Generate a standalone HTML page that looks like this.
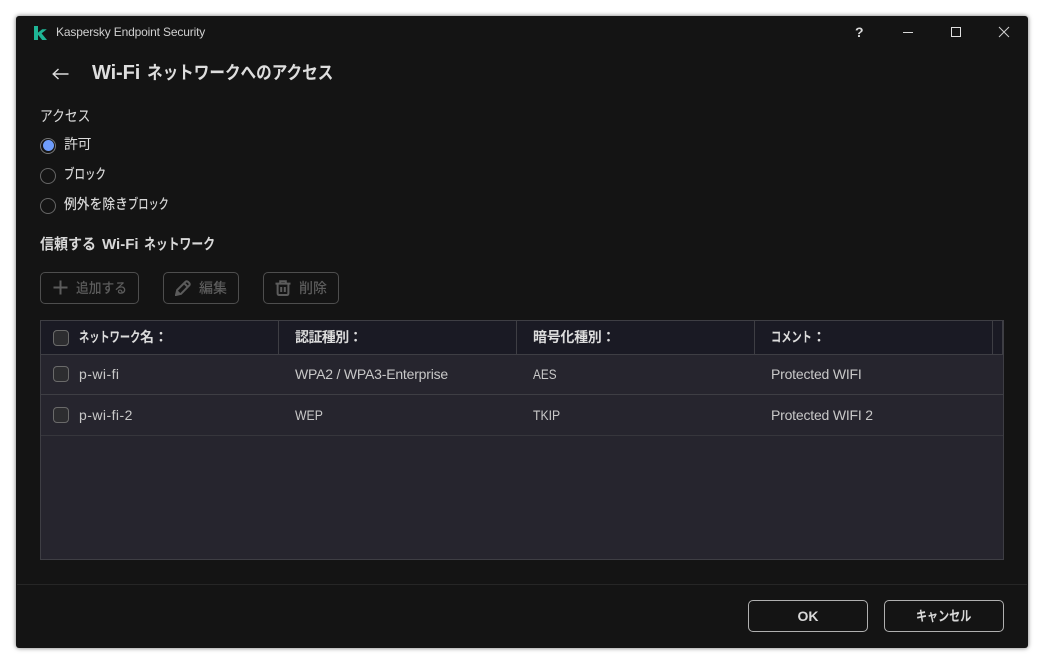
<!DOCTYPE html>
<html><head><meta charset="utf-8">
<style>
html,body{margin:0;padding:0;width:1044px;height:664px;overflow:hidden;background:#fff}
body{position:relative;font-family:"Liberation Sans","Noto Sans CJK JP",sans-serif;color:#d6d6d6}
.win{position:absolute;left:16px;top:16px;width:1012px;height:632px;background:#141414;border-radius:3px;box-shadow:0 0 5px rgba(0,0,0,.55)}
.t{position:absolute;white-space:nowrap;line-height:20px}
.b{position:absolute;box-sizing:border-box;border:1px solid #4e4e4e;border-radius:5px}
.r{position:absolute;left:40px;width:16px;height:16px;box-sizing:border-box;border:1px solid #666;border-radius:50%}
.c{position:absolute;left:53px;width:16px;height:16px;box-sizing:border-box;border:1px solid #6a6a6a;border-radius:4px;background:#2d2d30}
.l{position:absolute;background:#3e3e44}
.d{color:#5c5c5c;font-size:14px;font-weight:500}
.h{font-size:14px;font-weight:500;color:#dcdcdc}
.v{font-size:14px;color:#c8c8c8}
.k{display:inline-block;transform-origin:0 50%;white-space:nowrap}
svg{position:absolute}
</style></head><body>
<div class="win"></div>

<svg style="left:34px;top:26px" width="13" height="14" viewBox="0 0 13 14"><path d="M0 0H4V6.6L8.2 3.2H12.8L7.6 7.4L13 14H8.2L4 8.8V14H0Z" fill="#1fb596"/></svg>
<div class="t" style="left:56px;top:22px;font-size:12px;color:#d0d0d0;letter-spacing:-.16px">Kaspersky Endpoint Security</div>

<div class="t" style="left:855px;top:22px;font-size:14px;font-weight:700;color:#d8d8d8">?</div>
<div style="position:absolute;left:903px;top:32px;width:10px;height:1px;background:#d8d8d8"></div>
<div style="position:absolute;left:951px;top:27px;width:10px;height:10px;box-sizing:border-box;border:1px solid #e0e0e0"></div>
<svg style="left:998px;top:26px" width="12" height="12" viewBox="0 0 12 12"><path d="M1 1L11 11M11 1L1 11" stroke="#d0d0d0" stroke-width="1" fill="none"/></svg>

<svg style="left:52px;top:67px" width="17" height="14" viewBox="0 0 17 14"><path d="M1 7H16.5M6.5 2L1.2 7L6.5 12" stroke="#dcdcdc" stroke-width="1.4" fill="none"/></svg>
<div class="t" style="left:92px;top:62px;font-size:20px;font-weight:700;line-height:22px;color:#dedede;letter-spacing:-.1px">Wi-Fi<span class="k" style="font-size:18px;font-weight:700;letter-spacing:0;margin-left:7px;width:187px;transform:scaleX(.866)">ネットワークへのアクセス</span></div>

<div class="t" style="left:40px;top:107px;font-size:15px;color:#dcdcdc"><span class="k" style="width:51px;transform:scaleX(.85)">アクセス</span></div>

<div class="r" style="top:137.5px;border-color:#777"></div>
<div style="position:absolute;left:42.5px;top:140px;width:11px;height:11px;border-radius:50%;background:#6f9dfb"></div>
<div class="t" style="left:64px;top:134px;font-size:14px;color:#dcdcdc;letter-spacing:-.5px">許可</div>
<div class="r" style="top:168px"></div>
<div class="t" style="left:64px;top:164px;font-size:14px;font-weight:500;color:#d6d6d6"><span class="k" style="width:42px;transform:scaleX(.75)">ブロック</span></div>
<div class="r" style="top:198px"></div>
<div class="t" style="left:64px;top:194px;font-size:14px;font-weight:500;color:#d6d6d6"><span class="k" style="width:64px;transform:scaleX(.914)">例外を除き</span><span class="k" style="width:41px;transform:scaleX(.73)">ブロック</span></div>

<div class="t" style="left:40px;top:235px;font-size:15px;font-weight:700;color:#d8d8d8"><span class="k" style="width:56px;transform:scaleX(.933)">信頼する</span><span style="margin-left:6px">Wi-Fi</span><span class="k" style="margin-left:5px;width:71px;transform:scaleX(.79)">ネットワーク</span></div>

<div class="b" style="left:40px;top:272px;width:99px;height:32px"></div>
<svg style="left:53px;top:280px" width="15" height="15" viewBox="0 0 15 15"><path d="M7.5 0.5V14.5M0.5 7.5H14.5" stroke="#5c5c5c" stroke-width="2" fill="none"/></svg>
<div class="t d" style="left:76px;top:278px"><span class="k" style="width:51px;transform:scaleX(.91)">追加する</span></div>

<div class="b" style="left:163px;top:272px;width:76px;height:32px"></div>
<svg style="left:175px;top:280px" width="16" height="16" viewBox="0 0 16 16"><path d="M1 15L2.2 10L10.5 1.8Q11.8 .8 13 1.8L14.3 3.1Q15.2 4.3 14.2 5.5L6 13.8Z M9.2 3.3L12.8 6.9" stroke="#5c5c5c" stroke-width="2" fill="none"/><path d="M1 15L2.2 10L6 13.8Z" fill="#5c5c5c"/></svg>
<div class="t d" style="left:199px;top:278px">編集</div>

<div class="b" style="left:263px;top:272px;width:76px;height:32px"></div>
<svg style="left:275px;top:280px" width="16" height="16" viewBox="0 0 16 16"><path d="M0.5 3.6H15.5M5.2 3.5V1.2H10.8V3.5M2.6 4V13.2Q2.6 15 4.4 15H11.6Q13.4 15 13.4 13.2V4M6.2 7V12M9.8 7V12" stroke="#5c5c5c" stroke-width="2" fill="none"/></svg>
<div class="t d" style="left:299px;top:278px">削除</div>

<div style="position:absolute;left:40px;top:320px;width:964px;height:240px;box-sizing:border-box;border:1px solid #3e3e44;background:#26252e"></div>
<div style="position:absolute;left:41px;top:321px;width:961px;height:33px;background:#1a1a24"></div>
<div class="l" style="left:41px;top:354px;width:962px;height:1px"></div>
<div class="l" style="left:41px;top:394px;width:962px;height:1px"></div>
<div class="l" style="left:41px;top:435px;width:962px;height:1px;background:#36363c"></div>
<div class="l" style="left:278px;top:321px;width:1px;height:33px"></div>
<div class="l" style="left:516px;top:321px;width:1px;height:33px"></div>
<div class="l" style="left:754px;top:321px;width:1px;height:33px"></div>
<div class="l" style="left:992px;top:321px;width:1px;height:33px"></div>
<div class="l" style="left:1002px;top:321px;width:1px;height:33px"></div>

<div class="c" style="top:330px"></div>
<div class="c" style="top:366px"></div>
<div class="c" style="top:407px"></div>

<div class="t h" style="left:79px;top:327px;font-weight:700"><span class="k" style="width:61px;transform:scaleX(.73)">ネットワーク</span>名：</div>
<div class="t h" style="left:295px;top:327px;letter-spacing:-.6px;font-weight:700">認証種別：</div>
<div class="t h" style="left:533px;top:327px;letter-spacing:-.3px;font-weight:700">暗号化種別：</div>
<div class="t h" style="left:771px;top:327px;font-weight:700"><span class="k" style="width:41px;transform:scaleX(.73)">コメント</span>：</div>

<div class="t v" style="left:79px;top:364px;letter-spacing:.45px">p-wi-fi</div>
<div class="t v" style="left:295px;top:364px;letter-spacing:-.2px">WPA2 / WPA3-Enterprise</div>
<div class="t v" style="left:533px;top:364px"><span class="k" style="transform:scaleX(.84)">AES</span></div>
<div class="t v" style="left:771px;top:364px;letter-spacing:-.2px">Protected WIFI</div>
<div class="t v" style="left:79px;top:405px;letter-spacing:.45px">p-wi-fi-2</div>
<div class="t v" style="left:295px;top:405px"><span class="k" style="transform:scaleX(.875)">WEP</span></div>
<div class="t v" style="left:533px;top:405px"><span class="k" style="transform:scaleX(.87)">TKIP</span></div>
<div class="t v" style="left:771px;top:405px;letter-spacing:-.2px">Protected WIFI 2</div>

<div class="l" style="left:17px;top:584px;width:1010px;height:1px;background:#262626"></div>
<div class="b" style="left:748px;top:600px;width:120px;height:32px;border-color:#b0b0b0"></div>
<div class="t" style="left:748px;top:606px;width:120px;text-align:center;font-size:14px;font-weight:700;color:#d8d8d8">OK</div>
<div class="b" style="left:884px;top:600px;width:120px;height:32px;border-color:#b0b0b0"></div>
<div class="t" style="left:916px;top:606px;font-size:14px;font-weight:700;color:#d8d8d8"><span class="k" style="width:55px;transform:scaleX(.79)">キャンセル</span></div>
</body></html>
